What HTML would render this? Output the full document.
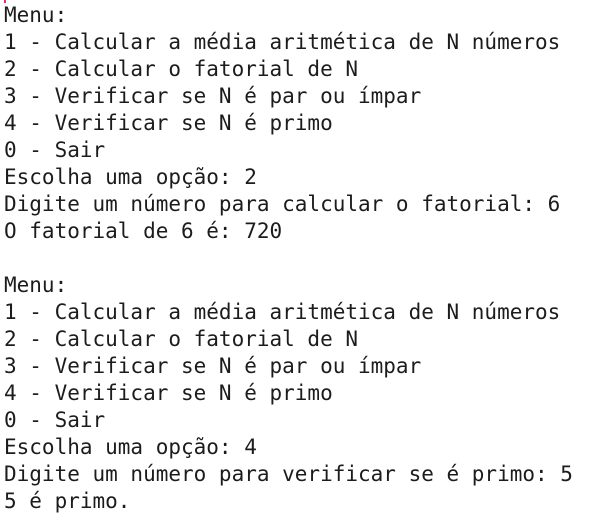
<!DOCTYPE html>
<html><head><meta charset="utf-8"><style>
html,body{margin:0;padding:0;background:#fff;width:590px;height:513px;overflow:hidden}
pre{margin:0;padding:2px 0 0 4px;font-family:"DejaVu Sans Mono",monospace;font-size:21px;line-height:27px;color:#1c1c1c}
.m{position:absolute;left:4px;top:0;width:2px;height:3px;background:#e0307a}
</style></head><body><div class="m"></div><pre>Menu:
1 - Calcular a média aritmética de N números
2 - Calcular o fatorial de N
3 - Verificar se N é par ou ímpar
4 - Verificar se N é primo
0 - Sair
Escolha uma opção: 2
Digite um número para calcular o fatorial: 6
O fatorial de 6 é: 720

Menu:
1 - Calcular a média aritmética de N números
2 - Calcular o fatorial de N
3 - Verificar se N é par ou ímpar
4 - Verificar se N é primo
0 - Sair
Escolha uma opção: 4
Digite um número para verificar se é primo: 5
5 é primo.</pre></body></html>
